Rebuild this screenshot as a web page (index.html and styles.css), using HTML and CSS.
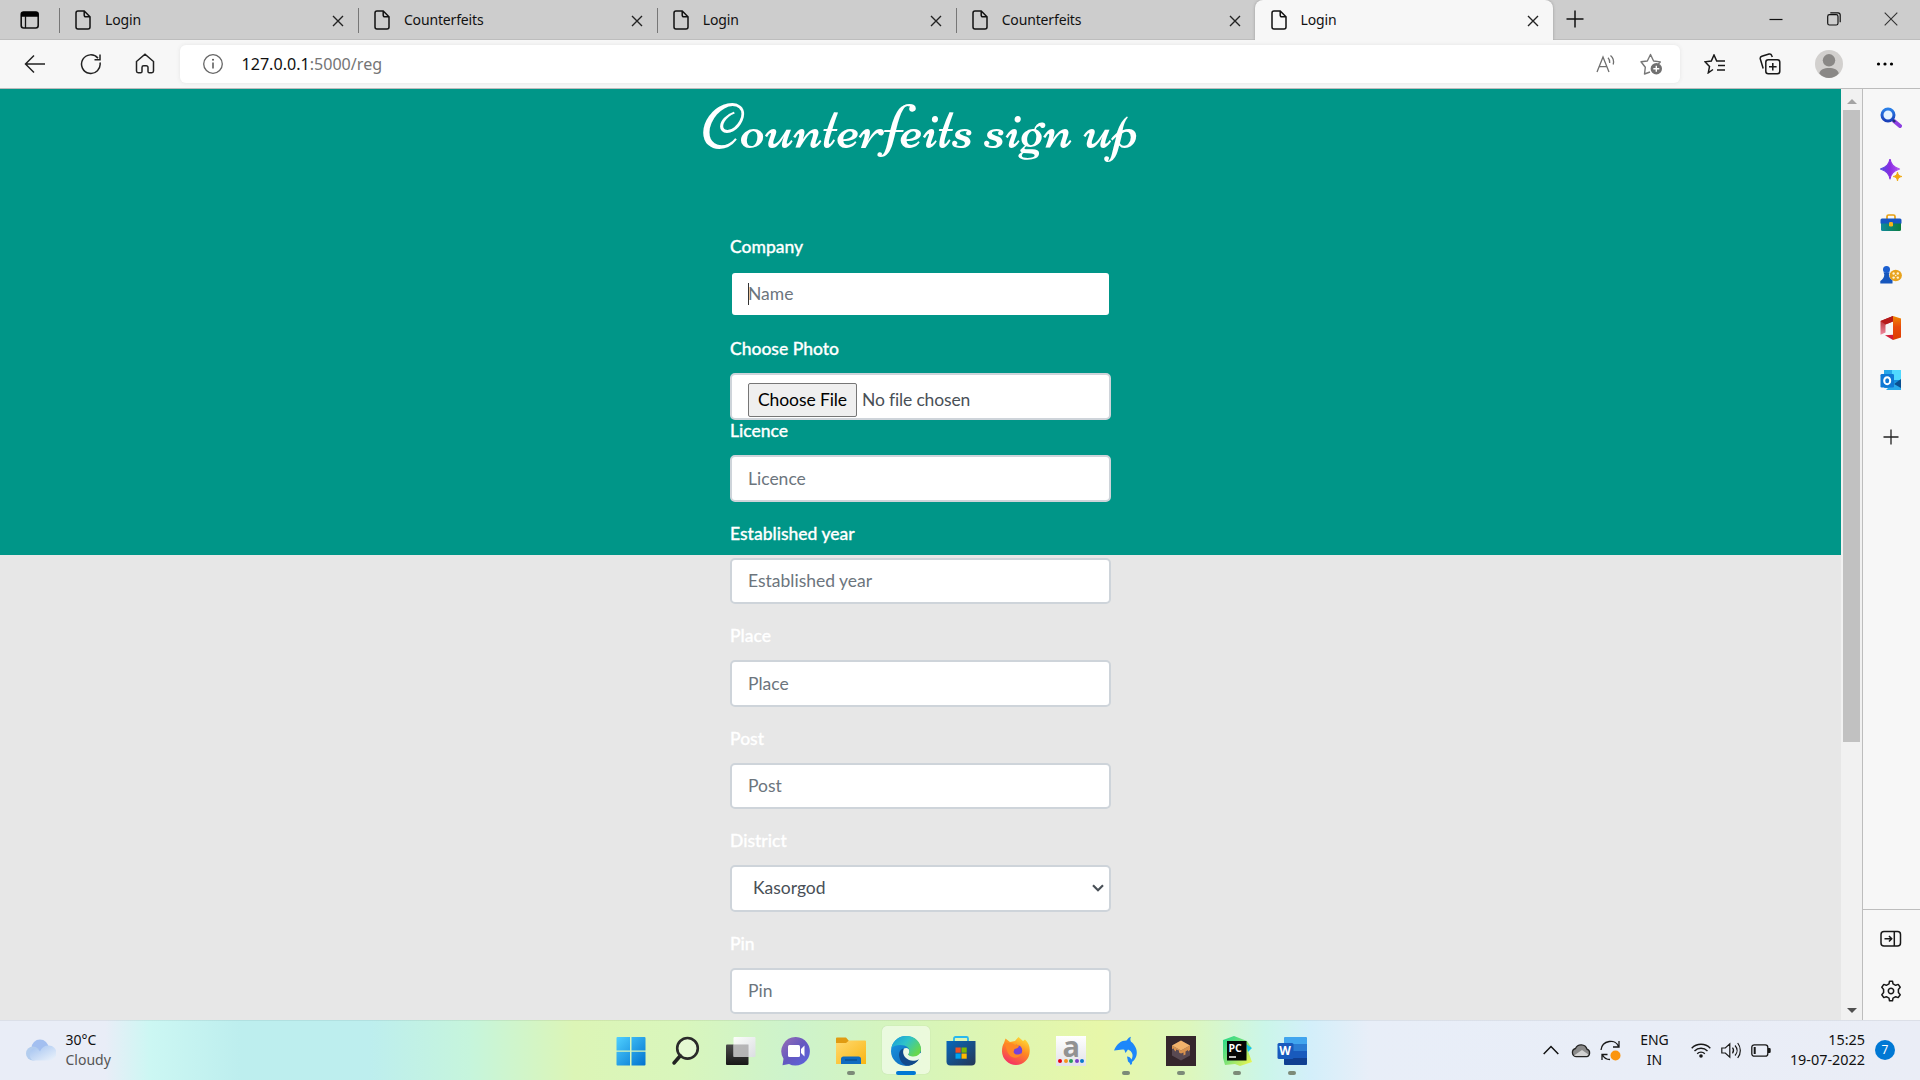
FILE: index.html
```html
<!DOCTYPE html>
<html lang="en">
<head>
<meta charset="utf-8">
<title>Login</title>
<link rel="stylesheet" href="styles.css">
</head>
<body>
<svg class="defs" width="0" height="0" aria-hidden="true">
  <defs>
    <linearGradient id="win" x1="0" y1="0" x2="1" y2="1"><stop offset="0" stop-color="#4fd0ff"/><stop offset="1" stop-color="#0072cf"/></linearGradient>
    <linearGradient id="lens" x1="0" y1="0" x2="0" y2="1"><stop offset="0" stop-color="#2a7fe8"/><stop offset="1" stop-color="#1a3fb8"/></linearGradient>
    <linearGradient id="spark" x1="0" y1="0" x2="1" y2="0"><stop offset="0" stop-color="#4f4be0"/><stop offset=".5" stop-color="#8a2be2"/><stop offset="1" stop-color="#b455f0"/></linearGradient>
    <linearGradient id="box" x1="0" y1="0" x2="1" y2="0"><stop offset="0" stop-color="#118a9e"/><stop offset="1" stop-color="#0b7d3e"/></linearGradient>
    <linearGradient id="office" x1="0" y1="0" x2="0" y2="1"><stop offset="0" stop-color="#f08a00"/><stop offset=".45" stop-color="#e84a0c"/><stop offset="1" stop-color="#dd3c00"/></linearGradient>
    <linearGradient id="officeL" x1="0" y1="0" x2="0" y2="1"><stop offset="0" stop-color="#a81818"/><stop offset="1" stop-color="#f08aa0"/></linearGradient>
    <linearGradient id="chat" x1="0" y1="0" x2="1" y2="1"><stop offset="0" stop-color="#9a70b4"/><stop offset=".5" stop-color="#6458c0"/><stop offset="1" stop-color="#5b64e0"/></linearGradient>
    <linearGradient id="folder" x1="0" y1="0" x2="1" y2="1"><stop offset="0" stop-color="#ffd970"/><stop offset="1" stop-color="#f9b613"/></linearGradient>
    <linearGradient id="edgeTop" x1="0" y1="0" x2="1" y2=".6"><stop offset="0" stop-color="#1498dc"/><stop offset=".5" stop-color="#2fc3c9"/><stop offset="1" stop-color="#67d84c"/></linearGradient>
    <linearGradient id="edgeLow" x1="0" y1="0" x2="1" y2="1"><stop offset="0" stop-color="#1b9be5"/><stop offset="1" stop-color="#0a5bb0"/></linearGradient>
    <linearGradient id="store" x1="0" y1="0" x2="1" y2="1"><stop offset="0" stop-color="#0868ba"/><stop offset="1" stop-color="#253656"/></linearGradient>
    <linearGradient id="fox" x1=".8" y1="0" x2=".3" y2="1"><stop offset="0" stop-color="#ffe238"/><stop offset=".45" stop-color="#ff8a20"/><stop offset="1" stop-color="#f52c68"/></linearGradient>
    <linearGradient id="glass" x1="0" y1="0" x2="1" y2="1"><stop offset="0" stop-color="#ffffff"/><stop offset="1" stop-color="#dcdce4"/></linearGradient>
    <linearGradient id="dark" x1="0" y1="0" x2="0" y2="1"><stop offset="0" stop-color="#4a4a4a"/><stop offset="1" stop-color="#171717"/></linearGradient>
    <linearGradient id="cloud" x1="0" y1="0" x2="1" y2="1"><stop offset="0" stop-color="#9fc0f0"/><stop offset="1" stop-color="#eef4fb"/></linearGradient>
    <linearGradient id="pc" x1="0" y1="0" x2="1" y2="1"><stop offset="0" stop-color="#21d789"/><stop offset=".5" stop-color="#7fe276"/><stop offset="1" stop-color="#fcf84a"/></linearGradient>
    <symbol id="page" viewBox="0 0 16 20"><path d="M3 1h6.2L15 6.8V17a2 2 0 0 1-2 2H3a2 2 0 0 1-2-2V3a2 2 0 0 1 2-2zM9.2 1v4.3a1.5 1.5 0 0 0 1.5 1.5H15" fill="none" stroke="#111" stroke-width="1.5"/></symbol>
    <symbol id="cross" viewBox="0 0 12 12"><path d="M1 1l10 10M11 1L1 11" stroke="#222" stroke-width="1.4"/></symbol>
  </defs>
</svg>

<header class="tabs">
  <div class="workspace"><svg width="20" height="18" viewBox="0 0 20 18"><rect x="1.2" y="1" width="17" height="16" rx="2.5" fill="none" stroke="#111" stroke-width="1.6"/><path d="M1 5.7V3a2.2 2.2 0 0 1 2.2-2.200h13A2.200 2.200 0 0 1 18.500 3v2.700z"/><path d="M5.500 5v12" stroke="#111" stroke-width="1.300"/></svg></div>
  <div class="tab"><svg class="page"><use href="#page"/></svg><span class="title">Login</span><svg class="cross"><use href="#cross"/></svg></div>
  <div class="tab"><svg class="page"><use href="#page"/></svg><span class="title">Counterfeits</span><svg class="cross"><use href="#cross"/></svg></div>
  <div class="tab"><svg class="page"><use href="#page"/></svg><span class="title">Login</span><svg class="cross"><use href="#cross"/></svg></div>
  <div class="tab"><svg class="page"><use href="#page"/></svg><span class="title">Counterfeits</span><svg class="cross"><use href="#cross"/></svg></div>
  <div class="tab active"><svg class="page"><use href="#page"/></svg><span class="title">Login</span><svg class="cross"><use href="#cross"/></svg></div>
  <svg class="newtab" width="18" height="18" viewBox="0 0 18 18"><path d="M9 .5v17M.5 9h17" stroke="#111" stroke-width="1.5"/></svg>
  <div class="window">
    <svg width="14" height="14" viewBox="0 0 14 14"><path d="M.5 7.500h13" stroke="#111" stroke-width="1.200"/></svg>
    <svg width="14" height="14" viewBox="0 0 14 14"><rect x=".7" y="2.700" width="10.300" height="10.300" rx="1.800" fill="none" stroke="#111" stroke-width="1.200"/><path d="M3.300.8H11a2.300 2.300 0 0 1 2.200 2.300v7.200" fill="none" stroke="#111" stroke-width="1.200"/></svg>
    <svg width="14" height="14" viewBox="0 0 14 14"><path d="M.7.7l12.600 12.600M13.300.7L.7 13.300" stroke="#333" stroke-width="1.100"/></svg>
  </div>
</header>

<nav class="toolbar">
  <div class="navicons">
    <svg width="22" height="20" viewBox="0 0 22 20"><path d="M10 1.500L1.500 10l8.500 8.500M1.500 10H21" fill="none" stroke="#222" stroke-width="1.500"/></svg>
    <svg width="22" height="22" viewBox="0 0 22 22"><path d="M20 9.500A9.300 9.300 0 1 1 18 5.200M20 1.500v5.300h-5.500" fill="none" stroke="#222" stroke-width="1.500"/></svg>
    <svg width="20" height="21" viewBox="0 0 20 21"><path d="M1.500 8.500L10 1.300l8.500 7.200V18a1.700 1.700 0 0 1-1.700 1.700h-2.500a1.300 1.300 0 0 1-1.300-1.300v-4a1.700 1.700 0 0 0-1.700-1.700H8.700A1.700 1.700 0 0 0 7 14.400v4a1.300 1.300 0 0 1-1.300 1.300H3.200A1.700 1.700 0 0 1 1.500 18z" fill="none" stroke="#222" stroke-width="1.500"/></svg>
  </div>
  <div class="address">
    <svg width="22" height="22" viewBox="0 0 22 22"><circle cx="11" cy="11" r="9.300" fill="none" stroke="#666" stroke-width="1.300"/><path d="M11 9.500v6" stroke="#555" stroke-width="1.500"/><circle cx="11" cy="6.700" r="1" fill="#555"/></svg>
    <span class="url"><span class="host">127.0.0.1</span>:5000/reg</span>
    <svg class="read" width="21" height="19" viewBox="0 0 21 19"><path d="M1 18L7 3l6 15M3.200 12.700h7.600M12 3.700c1.500 1.500 2 3.500 1.700 5.300M14.500 1.500c3 2.500 3.500 6 2.700 9" fill="none" stroke="#6f6f6f" stroke-width="1.300"/></svg>
    <svg width="23" height="22" viewBox="0 0 23 22"><path d="M10 19l-5.500 2 .8-6.700L1 8.800 7.300 8 10.500 1.500 13.600 8l6.700.9-2 2" fill="none" stroke="#777" stroke-width="1.400" stroke-linejoin="round"/><circle cx="16.300" cy="15.700" r="5.700" fill="#717171"/><path d="M16.300 12.700v6M13.300 15.700h6" stroke="#fff" stroke-width="1.400"/></svg>
  </div>
  <div class="actions">
    <svg width="22" height="20" viewBox="0 0 22 20"><path d="M9 15.500L4.300 18.800l1.200-6.200L1 7.800l6.300-.8L10 1l2.700 6H21M14 11.500h7M13 16h8" fill="none" stroke="#181818" stroke-width="1.500"/></svg>
    <svg width="22" height="22" viewBox="0 0 22 22"><rect x="6.800" y="6.800" width="14" height="14" rx="2.500" fill="none" stroke="#181818" stroke-width="1.500"/><path d="M4.200 15.500L1.300 6a2.300 2.300 0 0 1 1.500-2.700L10 1a2.300 2.300 0 0 1 2.700 1.500L13.300 4M13.800 10v7.600M10 13.800h7.600" fill="none" stroke="#181818" stroke-width="1.500"/></svg>
    <svg width="28" height="28" viewBox="0 0 28 28"><circle cx="14" cy="14" r="14" fill="#d2d0ce"/><circle cx="14" cy="10.300" r="6.200" fill="#8a8886"/><path d="M4.300 23.500C5 19.500 9 18 14 18s9 1.500 9.700 5.500A14 14 0 0 1 14 28a14 14 0 0 1-9.700-4.500z" fill="#8a8886"/></svg>
    <svg width="18" height="4" viewBox="0 0 18 4"><circle cx="2.500" cy="2" r="1.600"/><circle cx="9" cy="2" r="1.600"/><circle cx="15.500" cy="2" r="1.600"/></svg>
  </div>
</nav>

<div class="viewport">
  <main class="content">
    <h1 class="heading">Counterfeits sign up</h1>
    <form class="form">
      <div class="field"><label>Company</label><div class="control focused"><input type="text" placeholder="Name"><span class="caret"></span></div></div>
      <div class="field tight"><label>Choose Photo</label><input class="control file" type="file"></div>
      <div class="field"><label>Licence</label><input class="control" type="text" placeholder="Licence"></div>
      <div class="field"><label>Established year</label><input class="control" type="text" placeholder="Established year"></div>
      <div class="field"><label>Place</label><input class="control" type="text" placeholder="Place"></div>
      <div class="field"><label>Post</label><input class="control" type="text" placeholder="Post"></div>
      <div class="field"><label>District</label><div class="control select"><span>Kasorgod</span><svg width="12" height="8" viewBox="0 0 12 8"><path d="M1 1.200l5 5 5-5" fill="none" stroke="#495057" stroke-width="2.200"/></svg></div></div>
      <div class="field"><label>Pin</label><input class="control" type="text" placeholder="Pin"></div>
    </form>
  </main>
  <div class="scrollbar">
    <svg width="10" height="5" viewBox="0 0 10 5"><path d="M0 5l5-5 5 5z" fill="#a3a3a3"/></svg>
    <div class="thumb"></div>
    <svg class="down" width="10" height="5" viewBox="0 0 10 5"><path d="M0 0l5 5 5-5z" fill="#505050"/></svg>
  </div>
  <aside class="sidebar">
    <div class="apps">
      <svg width="22" height="22" viewBox="0 0 22 22"><path d="M14 14l6 5" stroke="#8d3fe0" stroke-width="4" stroke-linecap="round"/><path d="M12.500 12.500l2.500 2.500" stroke="#1b2f70" stroke-width="2.400"/><circle cx="8" cy="8" r="6" fill="#e6f4ff" stroke="url(#lens)" stroke-width="3"/></svg>
      <svg width="22" height="22" viewBox="0 0 22 22"><path d="M10 0c1 5.500 3.200 7.700 9.500 10-6.300 2.300-8.500 4.500-9.500 10C9 14.500 6.800 12.300.5 10 6.800 7.700 9 5.500 10 0z" fill="url(#spark)" stroke="url(#spark)" stroke-width="1.200" stroke-linejoin="round"/><path d="M17.500 13c.6 3 1.500 3.800 4.500 4.500-3 .7-3.900 1.500-4.500 4.500-.6-3-1.500-3.800-4.500-4.500 3-.7 3.900-1.500 4.500-4.500z" fill="#f0a810" stroke="#f0a810" stroke-width=".8"/></svg>
      <svg width="22" height="22" viewBox="0 0 22 22"><path d="M7 8V4.500A1.500 1.500 0 0 1 8.500 3h5A1.500 1.500 0 0 1 15 4.500V8" fill="none" stroke="#e8a010" stroke-width="1.700"/><rect x="1" y="8" width="20" height="11" rx="1.500" fill="url(#box)"/><path d="M2 6.500h18A1.500 1.500 0 0 1 21.500 8v3.500H.5V8A1.500 1.500 0 0 1 2 6.500z" fill="#1756c4"/><rect x="9" y="10" width="4" height="4.500" rx="1.300" fill="#f7b51b"/></svg>
      <svg width="22" height="22" viewBox="0 0 22 22"><circle cx="6.500" cy="5.500" r="3.500" fill="#1b5fd0"/><path d="M3.500 8.500h6.200l-.8 2C9 13 10 15 12.500 16v3.500H.3V17c2.400-1.500 4-3.500 4-6.500z" fill="#1757bd"/><ellipse cx="15.700" cy="11.500" rx="6.200" ry="5.700" fill="#e8a31e"/><g fill="#fff3d5"><circle cx="13.600" cy="9.500" r="1.200"/><circle cx="17.800" cy="9.500" r="1.200"/><circle cx="15.700" cy="11.500" r=".8"/><circle cx="13.600" cy="13.600" r="1.200"/><circle cx="17.800" cy="13.600" r="1.200"/></g></svg>
      <svg class="office" width="22" height="24" viewBox="0 0 22 24"><path d="M13 0l8 2.500v19L13 24z" fill="url(#office)"/><path d="M13 0v5.500l-7.500 3v8L.5 18.700V5z" fill="url(#officeL)"/><path d="M.5 5L13 0v5.500l-7.500 3z" fill="#b61a1a"/><path d="M5 19.200l8-.5V24z" fill="#d11c38"/></svg>
      <svg width="22" height="22" viewBox="0 0 22 22"><rect x="4" y="1" width="17" height="18" rx="1" fill="#1490df"/><path d="M12 1h9v10h-9z" fill="#50d9ff"/><path d="M4 1h8v5H4z" fill="#28a8ea"/><path d="M21 11v10H6l6-6z" fill="#28a8ea"/><path d="M14 15l7-5v9z" fill="#0a4f90"/><rect x=".5" y="5" width="13.500" height="13.500" rx="1.200" fill="#0f78d4"/><ellipse cx="7.200" cy="11.700" rx="3" ry="3.500" fill="none" stroke="#fff" stroke-width="2"/></svg>
      <svg class="plus" width="16" height="16" viewBox="0 0 16 16"><path d="M8 .5v15M.5 8h15" stroke="#222" stroke-width="1.300"/></svg>
    </div>
    <div class="settings">
      <svg width="22" height="18" viewBox="0 0 22 18"><rect x="1" y="1.500" width="19.500" height="14.500" rx="3" fill="none" stroke="#181818" stroke-width="1.500"/><path d="M14.300 1.500V16M4.500 8.800h7M9 6l2.700 2.800L9 11.500" fill="none" stroke="#181818" stroke-width="1.500"/></svg>
      <svg width="22" height="22" viewBox="-11 -11 22 22"><path d="M-2 -7.200L-1.500 -9.800H1.500L2 -7.200L4.700 -5.700L7.200 -6.600L9.200 -3.700L7.400 -1.600V1.600L9.200 3.700L7.200 6.600L4.700 5.700L2 7.200L1.500 9.800H-1.500L-2 7.200L-4.700 5.700L-7.200 6.600L-9.200 3.700L-7.400 1.600V-1.600L-9.200 -3.700L-7.200 -6.600L-4.700 -5.700Z" fill="none" stroke="#181818" stroke-width="1.500" stroke-linejoin="round"/><circle r="2.700" fill="none" stroke="#181818" stroke-width="1.500"/></svg>
    </div>
  </aside>
</div>

<footer class="taskbar">
  <div class="weather">
    <svg width="30" height="22" viewBox="0 0 30 22"><circle cx="14" cy="9" r="8.500" fill="#a3bff0"/><circle cx="7" cy="14.500" r="7" fill="#b3cdee"/><path d="M7 21.500a7 7 0 0 1 0-12c3-.5 5 .5 7 3a8.500 8.500 0 0 1 9-6 7.500 7.500 0 0 1 0 15z" fill="url(#cloud)"/></svg>
    <div class="wtext"><span>30°C</span><span class="dim">Cloudy</span></div>
  </div>
  <div class="pins">
    <div class="pin"><svg width="30" height="30" viewBox="0 0 30 30"><path d="M1.500 1H14v13.500H.5V2a1 1 0 0 1 1-1zM15.500 1h13a1 1 0 0 1 1 1v12.500h-14zM.5 15.700H14V29.500H1.500a1 1 0 0 1-1-1zM15.500 15.700h14v12.800a1 1 0 0 1-1 1h-13z" fill="url(#win)"/></svg></div>
    <div class="pin"><svg width="30" height="30" viewBox="0 0 30 30"><path d="M9.500 19.500L3 27" stroke="#222" stroke-width="3.500" stroke-linecap="round"/><circle cx="16.500" cy="12.300" r="10.300" fill="#ffffff55" stroke="#2a2a2a" stroke-width="2.600"/></svg></div>
    <div class="pin"><svg width="30" height="30" viewBox="0 0 30 30"><rect y="8.500" width="22.500" height="20.500" rx="1" fill="url(#dark)"/><rect x="7.500" y="1" width="22" height="20" rx="1" fill="url(#glass)" fill-opacity=".93"/><path d="M7.500 8.500h15V21h-15z" fill="#aaa" fill-opacity=".8"/></svg></div>
    <div class="pin"><svg width="30" height="30" viewBox="0 0 30 30"><path d="M15 1a14.300 14.300 0 1 1-7 27l-6.500 1.300 1-6.500A14.300 14.300 0 0 1 15 1z" fill="url(#chat)"/><rect x="7" y="9" width="12" height="12" rx="1.500" fill="#fff"/><path d="M20 13l3.500-3.500v11L20 17z" fill="#fff"/></svg></div>
    <div class="pin running"><svg width="30" height="30" viewBox="0 0 30 30"><path d="M0 2.500A1 1 0 0 1 1 1.500h9L13 5v5H0z" fill="#e09b12"/><path d="M0 7h10l3-2.500h16a1 1 0 0 1 1 1V28H0z" fill="url(#folder)"/><path d="M5 28v-5a2.500 2.500 0 0 1 2.500-2.500h15A2.500 2.500 0 0 1 25 23v5z" fill="#0f6bc0"/><path d="M9 24h12" stroke="#0b4a86" stroke-width="1.200"/></svg></div>
    <div class="pin current"><svg width="30" height="30" viewBox="0 0 30 30"><circle cx="15" cy="15" r="15" fill="url(#edgeLow)"/><path d="M12 12.500C8.500 14 7.500 17.500 8.300 21c1 5 5 9 9.500 8.700 4-.5 8-3 10-6.200L20 20z" fill="#114a8b"/><path d="M13 12.500c2.500-1.500 5.500 0 5.500 3 0 2-1.500 2.500-1 3.500l12.500-2v7l-2.300-.8c-2.500 1.500-6.500 2.300-9.700.8C13.500 22 10.500 17 13 12.500z" fill="#ecf9e6"/><path d="M.4 12C2 4.500 8 0 15.300 0 24 0 30 6.300 30 13c0 4.500-3 7.500-7.500 7.500-3.500 0-6-1.300-4.700-3 1.700-3 .2-6.500-4.300-8C8.500 8 3 9.500.4 12z" fill="url(#edgeTop)"/></svg></div>
    <div class="pin"><svg width="30" height="30" viewBox="0 0 30 30"><path d="M8 6V2.500A1.500 1.500 0 0 1 9.500 1h11A1.500 1.500 0 0 1 22 2.500V6" fill="none" stroke="#28b8ee" stroke-width="1.800"/><path d="M.5 5h29v20.500a4 4 0 0 1-4 4h-21a4 4 0 0 1-4-4z" fill="url(#store)"/><path d="M9.500 11.500h5.200v5.200H9.500z" fill="#f25022"/><path d="M15.500 11.500h5.200v5.200h-5.200z" fill="#7fba00"/><path d="M9.500 17.500h5.200v5.200H9.500z" fill="#00a4ef"/><path d="M15.500 17.500h5.200v5.200h-5.200z" fill="#ffb900"/></svg></div>
    <div class="pin"><svg width="30" height="30" viewBox="0 0 30 30"><path d="M3 7l1.500-4.500L9 6l5-1 3.500-4 4.500 4 2-1.500c3.500 3 5 7 4.700 12A13.800 13.800 0 0 1 15 29 14 14 0 0 1 1 15.500C1 12 1.500 9 3 7z" fill="url(#fox)"/><circle cx="15.500" cy="14.500" r="5.700" fill="#7542d8"/><path d="M4 8c4-2 8-1 10 1h4c0 3-2.500 3.500-4.500 4l-1 3c1 3 5 3.500 8 1-1.500 4.500-6 5.500-9.500 4C7 19 6 15 4 8z" fill="#ff8725"/></svg></div>
    <div class="pin"><div class="a-tile"><b>a</b><div class="dots"><i class="c1"></i><i class="c2"></i><i class="c3"></i><i class="c4"></i><i class="c5"></i></div></div></div>
    <div class="pin running"><svg width="30" height="30" viewBox="0 0 30 30"><path d="M3 14.500c3-7 7-10 12.500-10C17 2.500 18 1 20 .7c-1 2-.7 3.500 0 5C26 10 29 20 21 26c.5 1.500-.3 2.700-1.500 3-.3-1.500-1.200-2.500-2.500-3.500l-1-5c2 0 3.500 1 4.500 3C23 19 21 15 17 13.500L14.500 17l-1.200-3.300C10 13 7 14.500 3 14.500z" fill="#1c87fa"/></svg></div>
    <div class="pin running"><svg width="30" height="30" viewBox="0 0 30 30"><path d="M0 0h30v30H0z" fill="#35262c"/><path d="M15 4.500l9 5v10l-9 5-9-5v-10z" fill="#594952"/><path d="M6 9.500l9 5 9-5v4.500l-2 1.500v-1.500l-2.500 1.500v3l-2 1v-3l-2.500 1-2-1v-2l-3-1v2l-2-1.500v-1.500L6 13z" fill="#d9924e"/><path d="M15 4.500l9 5-9 5-9-5z" fill="#f2b26b"/></svg></div>
    <div class="pin running"><svg width="30" height="30" viewBox="0 0 30 30"><path d="M1 4L12 0l13 5 4 6-3 4 4 11-12 4-5-2-10 1-2-7z" fill="url(#pc)"/><path d="M24 8l6 4-4 4z" fill="#18c5e8"/><path d="M5 5h19.500v19.500H5z" fill="#050505"/><text x="6.500" y="16" class="pc-text">PC</text><path d="M7 21h7" stroke="#fff" stroke-width="1.500"/></svg></div>
    <div class="pin running"><svg width="30" height="30" viewBox="0 0 30 30"><rect x="7" y="1" width="23" height="28" rx="1.500" fill="#2b7cd3"/><path d="M7 8V2.500A1.500 1.500 0 0 1 8.500 1h20A1.500 1.500 0 0 1 30 2.500V8z" fill="#41a5ee"/><path d="M7 15h23v7H7z" fill="#185abd"/><path d="M7 22h23v5.500a1.500 1.500 0 0 1-1.500 1.500h-20A1.500 1.500 0 0 1 7 27.500z" fill="#103f91"/><rect x=".5" y="7" width="16" height="16" rx="1.500" fill="#185abd"/><text x="2.300" y="19.300" class="word-text">W</text></svg></div>
  </div>
  <div class="tray">
    <svg class="up" width="16" height="10" viewBox="0 0 16 10"><path d="M.7 9L8 1.500 15.300 9" fill="none" stroke="#111" stroke-width="1.500"/></svg>
    <svg class="drive" width="20" height="15" viewBox="0 0 20 15"><path d="M5 13.700a4.200 4.200 0 0 1-.5-8.200 6.200 6.200 0 0 1 11.500.7 3.900 3.900 0 0 1-.5 7.500z" fill="#8a8a8a" stroke="#222" stroke-width="1.300"/><path d="M3 12.500L11 7l6.500 4.500-1.500 1.500H5z" fill="#d2d2d2"/></svg>
    <svg class="sync" width="21" height="21" viewBox="0 0 21 21"><path d="M1 10C2 0 16-1.500 18.500 6.500M19 1v6h-6M2 20v-5.500h5.500M2.500 15c1.500 3 4.500 4.500 7.500 4.500" fill="none" stroke="#181818" stroke-width="1.300"/><circle cx="15.500" cy="15.500" r="5" fill="#fb950d"/></svg>
    <div class="lang"><span>ENG</span><span>IN</span></div>
    <svg class="wifi" width="20" height="15" viewBox="0 0 20 15"><path d="M.7 5.200a13 13 0 0 1 18.600 0M3.500 8a9.200 9.200 0 0 1 13 0M6.200 10.700a5.400 5.400 0 0 1 7.600 0" fill="none" stroke="#181818" stroke-width="1.400"/><circle cx="10" cy="13" r="1.800" fill="#181818"/></svg>
    <svg class="sound" width="20" height="17" viewBox="0 0 20 17"><path d="M.8 6v5h3.500l4.500 4.200V1.800L4.300 6zM11.500 5.700c1.300 1.700 1.300 3.900 0 5.600M14 3.500c2.700 3 2.700 7 0 10M16.700 1c3.500 4.500 3.500 10.500 0 15" fill="none" stroke="#181818" stroke-width="1.200"/></svg>
    <svg class="battery" width="20" height="13" viewBox="0 0 20 13"><rect x=".8" y=".8" width="16" height="11.400" rx="2.500" fill="none" stroke="#181818" stroke-width="1.300"/><rect x="2.700" y="3" width="2" height="7" fill="#181818"/><path d="M17 4h1.500a1.200 1.200 0 0 1 1.200 1.200v2.600A1.200 1.200 0 0 1 18.500 9H17z" fill="#181818"/></svg>
    <div class="clock"><span>15:25</span><span>19-07-2022</span></div>
    <span class="badge">7</span>
  </div>
</footer>
</body>
</html>
```

FILE: styles.css
```css
* { box-sizing: border-box; }
body {
  margin: 0;
  width: 1920px;
  height: 1080px;
  overflow: hidden;
  display: flex;
  flex-direction: column;
  font-family: "Noto Sans", "Open Sans", sans-serif;
  color: #111;
}
svg { display: block; flex: none; }
.defs { position: absolute; }

/* Tab strip */
.tabs { flex: none; height: 40px; background: #cdcdcd; display: flex; box-shadow: inset 0 -1px 0 #bdbdbd; }
.workspace { width: 59px; padding: 11px 0 0 20px; }
.tab { position: relative; width: 298.900px; height: 40px; padding: 0 14px 0 16px; display: flex; align-items: center; }
.tab:not(.active)::before { content: ""; position: absolute; left: 0; top: 8px; width: 1px; height: 25px; background: #777; }
.tab.active { background: #f7f7f7; border-radius: 8px 8px 0 0; box-shadow: 0 0 3px #999; clip-path: inset(0 -4px 0 -4px); }
.page { width: 16px; height: 20px; margin-right: 14px; }
.title { font-size: 14px; letter-spacing: -.15px; flex: 1; padding-bottom: 2px; }
.cross { width: 12px; height: 12px; margin-top: 2px; }
.newtab { margin: 10px 0 0 13px; }
.window { margin-left: auto; padding: 12px 22px 0 0; display: flex; gap: 43.500px; }

/* Toolbar */
.toolbar { flex: none; height: 49px; background: #f7f7f7; border-bottom: 1px solid #bcbcbc; display: flex; align-items: center; padding-bottom: 1px; }
.navicons { width: 180px; padding-left: 24px; display: flex; align-items: center; gap: 33.500px; }
.address { width: 1500px; height: 38px; background: #fff; border-radius: 6px; box-shadow: 0 0 4px #e4e4e4; display: flex; align-items: center; padding: 0 17px 0 21.500px; }
.url { margin-left: 18px; font-size: 16.100px; color: #757575; flex: 1; }
.host { color: #111; }
.read { margin-right: 23px; }
.actions { flex: 1; display: flex; align-items: center; justify-content: space-between; padding: 0 26px 0 24px; }

/* Page */
.viewport { flex: none; height: 931px; display: flex; }
.content {
  width: 1841px;
  overflow: hidden;
  background: linear-gradient(#009688 466px, #e7e7e7 466px);
  display: flex;
  flex-direction: column;
  align-items: center;
  font-family: Lato, sans-serif;
}
.heading {
  flex: none;
  margin: 0;
  height: 145.500px;
  padding-top: 8px;
  font: 400 65.300px/60px Niconne, "Liberation Serif", serif;
  color: #fff;
  white-space: nowrap;
}
.form { width: 381px; font-size: 17.500px; }
.field { height: 102.500px; }
.field.tight { height: 82px; }
.field label { display: block; height: 36px; line-height: 24px; color: #fff; font-weight: 500; -webkit-text-stroke: .3px #fff; }
.control {
  display: block;
  width: 100%;
  height: 46.500px;
  border: 2px solid #ced4da;
  border-radius: 5px;
  background: #fff;
  color: #495057;
  font: 400 17.500px/26px Lato, sans-serif;
  padding: 7px 16px;
}
.control.focused { position: relative; border-color: #009688; }
.focused input { display: block; width: 100%; border: 0; padding: 2px 0; outline: 0; font: inherit; height: 28px; }
.control::placeholder, .focused input::placeholder { color: #6c757d; opacity: 1; }
.caret { position: absolute; left: 16px; top: 10px; width: 1px; height: 22px; background: #333; }
.file { padding: 8px 16px 0; overflow: hidden; letter-spacing: -.15px; }
.file::file-selector-button {
  height: 34px;
  padding: 1px 9px;
  margin-right: 5px;
  border: 1px solid #767676;
  border-radius: 2px;
  background: #efefef;
  color: #000;
  font: 400 17.500px/30px Lato, sans-serif;
  letter-spacing: -.1px;
}
.select { display: flex; align-items: center; justify-content: space-between; padding: 0 5px 0 21px; }

.scrollbar { width: 21px; background: #f1f1f1; display: flex; flex-direction: column; align-items: center; padding: 10px 0 7px; }
.thumb { width: 17px; height: 632px; margin-top: 6px; background: #c1c1c1; }
.down { margin-top: auto; }
.sidebar { width: 58px; border-left: 1px solid #bdbdbd; background: #f7f7f7; display: flex; flex-direction: column; justify-content: space-between; }
.apps { display: flex; flex-direction: column; align-items: center; padding: 17.500px 1px 0 0; gap: 30.500px; }
.office { margin: -1px 0; }
.plus { margin-top: 7px; }
.settings { height: 111px; border-top: 1px solid #bdbdbd; display: flex; flex-direction: column; align-items: center; gap: 32px; padding: 20px 1px 0 0; }

/* Taskbar */
.taskbar {
  flex: none;
  height: 60px;
  border-top: 1px solid #0000000f;
  padding-bottom: 1px;
  display: flex;
  font-size: 14px;
  background: linear-gradient(90deg, #e9edf7 105px, #ccf7f3 150px, #bdeeee 240px, #bdeeee 370px, #c6f5dc 470px, #dcf5b6 575px, #d9f6bc 680px, #cdf3cc 790px, #d8f5b8 930px, #e7f7a9 1100px, #ddf7bd 1190px, #cbf6e9 1265px, #d3effa 1310px, #e8eef8 1370px, #eaedf6 1920px);
}
.weather { width: 603px; padding: 0 0 0 26px; display: flex; align-items: center; gap: 9.500px; }
.wtext { display: flex; flex-direction: column; line-height: 20px; }
.dim { color: #555; }
.pins { display: flex; }
.pin { position: relative; width: 55.100px; height: 59px; display: flex; align-items: center; justify-content: center; }
.pin.current::before { content: ""; position: absolute; left: 3.500px; top: 5px; width: 48px; height: 48px; border-radius: 5px; background: #ffffff80; box-shadow: 0 0 1px #0003; }
.pin.current svg { position: relative; }
.pin.running::after, .pin.current::after { content: ""; position: absolute; bottom: 5px; left: 23.500px; width: 8px; height: 4px; border-radius: 2px; background: #7c8a78; }
.pin.current::after { left: 17.500px; width: 20px; background: #0078d4; }
.pc-text { font: 700 10.500px "Open Sans", sans-serif; fill: #fff; }
.word-text { font: 700 12px "Open Sans", sans-serif; fill: #fff; }
.a-tile { width: 30px; height: 30px; background: linear-gradient(#fff, #e2e2e8); display: flex; flex-direction: column; align-items: center; }
.a-tile b { font: 700 29px/20px "Open Sans", sans-serif; height: 23px; color: #929292; }
.dots { display: flex; gap: 1.600px; }
.dots i { width: 4px; height: 4px; border-radius: 50%; }
.c1 { background: #e60012; }
.c2 { background: #f7931e; }
.c3 { background: #22a05a; }
.c4 { background: #7a3fc8; }
.c5 { background: #0a78d0; }
.tray { flex: 1; padding-right: 25px; display: flex; align-items: center; justify-content: flex-end; }
.drive { margin-left: 12px; }
.sync { margin-left: 9px; }
.lang { width: 70px; padding-right: 3px; text-align: center; display: flex; flex-direction: column; line-height: 20px; }
.sound, .battery { margin-left: 10px; }
.clock { width: 94px; text-align: right; display: flex; flex-direction: column; line-height: 20px; font-size: 14.400px; }
.badge { margin-left: 10px; width: 20px; height: 20px; border-radius: 50%; background: #0078d4; color: #fff; font-size: 12px; line-height: 20px; text-align: center; }
```
